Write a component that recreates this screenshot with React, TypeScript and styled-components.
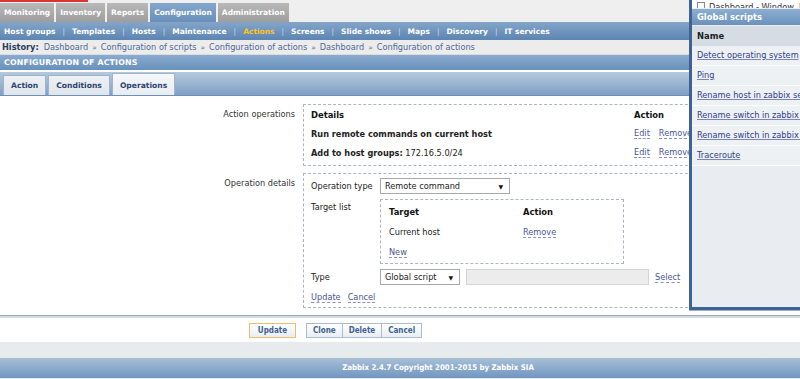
import React from 'react'
import styled, { createGlobalStyle, css } from 'styled-components'

const GlobalStyle = createGlobalStyle`
    html, body {
        margin: 0;
        padding: 0;
        background: #ffffff;
    }
    body {
        font-family: "DejaVu Sans", Verdana, sans-serif;
        font-size: 8.2px;
        color: #222;
    }
`;

const mainTabs = ["Monitoring", "Inventory", "Reports", "Configuration", "Administration"];
const subItems = ["Host groups", "Templates", "Hosts", "Maintenance", "Actions", "Screens", "Slide shows", "Maps", "Discovery", "IT services"];
const history = ["Dashboard", "Configuration of scripts", "Configuration of actions", "Dashboard", "Configuration of actions"];
const scripts = ["Detect operating system", "Ping", "Rename host in zabbix server", "Rename switch in zabbix server", "Rename switch in zabbix proxy", "Traceroute"];

export default function App() {
    return (
        <>
            <GlobalStyle />
            <Page>
                <TopBar>
                    <RedLine />
                    <MainTabs>
                        {mainTabs.map(t => <MainTab key={t} active={t === "Configuration"}>{t}</MainTab>)}
                    </MainTabs>
                </TopBar>

                <SubMenu>
                    {subItems.map((s, i) => (
                        <React.Fragment key={s}>
                            {i > 0 && <SubSep>|</SubSep>}
                            <SubItem active={s === "Actions"}>{s}</SubItem>
                        </React.Fragment>
                    ))}
                </SubMenu>

                <History>
                    <b>History:</b>
                    {history.map((h, i) => (
                        <React.Fragment key={i}>
                            {i > 0 && <HistSep>»</HistSep>}
                            <HistLink>{h}</HistLink>
                        </React.Fragment>
                    ))}
                </History>

                <TitleBar>CONFIGURATION OF ACTIONS</TitleBar>

                <TabsBar>
                    <FormTab>Action</FormTab>
                    <FormTab>Conditions</FormTab>
                    <FormTab active>Operations</FormTab>
                </TabsBar>

                <Content>
                    <FormRow>
                        <RowLabel>Action operations</RowLabel>
                        <Box>
                            <OpsGrid>
                                <HeadCell>Details</HeadCell>
                                <HeadCell>Action</HeadCell>
                                <Cell><b>Run remote commands on current host</b></Cell>
                                <Cell><DashLink>Edit</DashLink><DashLink>Remove</DashLink></Cell>
                                <Cell><span><b>Add to host groups:</b> 172.16.5.0/24</span></Cell>
                                <Cell><DashLink>Edit</DashLink><DashLink>Remove</DashLink></Cell>
                            </OpsGrid>
                        </Box>
                    </FormRow>

                    <FormRow>
                        <RowLabel>Operation details</RowLabel>
                        <Box>
                            <DetailGrid>
                                <InnerLabel>Operation type</InnerLabel>
                                <Select width={130}>Remote command<Arrow>▼</Arrow></Select>

                                <InnerLabel top>Target list</InnerLabel>
                                <TargetBox>
                                    <HeadCell>Target</HeadCell>
                                    <HeadCell>Action</HeadCell>
                                    <TargetCell>Current host</TargetCell>
                                    <TargetCell><DashLink>Remove</DashLink></TargetCell>
                                    <TargetCell><DashLink>New</DashLink></TargetCell>
                                    <TargetCell />
                                </TargetBox>

                                <InnerLabel>Type</InnerLabel>
                                <TypeLine>
                                    <Select width={80}>Global script<Arrow>▼</Arrow></Select>
                                    <TextInput />
                                    <DashLink>Select</DashLink>
                                </TypeLine>

                                <LinkLine>
                                    <DashLink>Update</DashLink>
                                    <DashLink>Cancel</DashLink>
                                </LinkLine>
                            </DetailGrid>
                        </Box>
                    </FormRow>
                </Content>

                <Divider />

                <Buttons>
                    <Button main>Update</Button>
                    <ButtonGroup>
                        <Button>Clone</Button>
                        <Button>Delete</Button>
                        <Button>Cancel</Button>
                    </ButtonGroup>
                </Buttons>

                <GrayBand />
                <Footer>Zabbix 2.4.7 Copyright 2001-2015 by Zabbix SIA</Footer>

                <Popup>
                    <PopupTop>
                        <CheckBox />
                        <PopupTopText>Dashboard - Window, Linux</PopupTopText>
                    </PopupTop>
                    <PopupHeader>Global scripts</PopupHeader>
                    <PopupNameRow>Name</PopupNameRow>
                    {scripts.map((s, i) => (
                        <PopupRow key={i}><PopupLink>{s}</PopupLink></PopupRow>
                    ))}
                </Popup>
            </Page>
        </>
    )
}

const Page = styled.div`
    position: relative;
    width: 800px;
    height: 379px;
    overflow: hidden;
    background: #ffffff;
`;

const TopBar = styled.div`
    height: 22px;
    background: #efefef;
`;

const RedLine = styled.div`
    width: 88px;
    height: 2px;
    background: #d9342f;
`;

const MainTabs = styled.div`
    display: flex;
    gap: 2px;
    margin-top: 1px;
`;

const MainTab = styled.div<{ active?: boolean }>`
    height: 19px;
    line-height: 19px;
    padding: 0 4px;
    font-size: 7.5px;
    font-weight: bold;
    color: #fff;
    background: linear-gradient(#b9b9b9, #9d9d9d);
    ${p => p.active && css`
        background: linear-gradient(#84a6cb, #6890ba);
    `}
`;

const SubMenu = styled.div`
    display: flex;
    align-items: center;
    height: 18px;
    padding-left: 4px;
    background: linear-gradient(#84a5c9, #5c85b2);
`;

const SubItem = styled.span<{ active?: boolean }>`
    font-size: 7.5px;
    font-weight: bold;
    color: ${p => p.active ? "#ffc31a" : "#ffffff"};
`;

const SubSep = styled.span`
    margin: 0 7px;
    font-size: 7.5px;
    color: #c9d8e8;
`;

const History = styled.div`
    height: 15px;
    line-height: 15px;
    padding-left: 2px;
    background: #ececec;
    font-size: 8.2px;
    color: #2b3e5e;
    border-bottom: 1px solid #dcdcdc;
    box-sizing: border-box;
    white-space: nowrap;

    b {
        margin-right: 5px;
    }
`;

const HistLink = styled.span`
    color: #4d6a96;
`;

const HistSep = styled.span`
    margin: 0 4px;
    color: #5a6f8f;
    font-size: 7.5px;
`;

const TitleBar = styled.div`
    height: 15px;
    line-height: 15px;
    padding-left: 4px;
    font-size: 7.8px;
    font-weight: bold;
    color: #fff;
    letter-spacing: 0.2px;
    background: linear-gradient(#8aabcf, #6790bb);
`;

const TabsBar = styled.div`
    display: flex;
    align-items: flex-end;
    gap: 2px;
    height: 23px;
    margin-top: 2px;
    padding-left: 3px;
    background: linear-gradient(#b6c9dd, #7fa0c4);
    border-bottom: 1px solid #6d8fb6;
`;

const FormTab = styled.div<{ active?: boolean }>`
    height: 19px;
    line-height: 19px;
    padding: 0 7px;
    font-size: 7.6px;
    font-weight: bold;
    color: #2c4570;
    background: linear-gradient(#eef1f4, #dfe5eb);
    border: 1px solid #9fb3cb;
    border-bottom: none;
    ${p => p.active && css`
        height: 21px;
        line-height: 23px;
        background: linear-gradient(#f6f8fa, #e8edf2);
    `}
`;

const Content = styled.div`
    display: flex;
    flex-direction: column;
    gap: 7px;
    padding-top: 8px;
    height: 218px;
    box-sizing: border-box;
`;

const FormRow = styled.div`
    display: grid;
    grid-template-columns: 295px 420px;
    column-gap: 8px;
`;

const RowLabel = styled.div`
    text-align: right;
    padding-top: 5px;
    color: #333;
`;

const Box = styled.div`
    border: 1px dashed #aab6c4;
`;

const OpsGrid = styled.div`
    display: grid;
    grid-template-columns: 323px 1fr;
    grid-auto-rows: 19px;
    padding: 0 7px 3px;
`;

const HeadCell = styled.div`
    display: flex;
    align-items: center;
    font-weight: bold;
    font-size: 8.4px;
    color: #111;
`;

const Cell = styled.div`
    display: flex;
    align-items: center;
    gap: 9px;
    white-space: nowrap;
    color: #222;
`;

const DashLink = styled.span`
    color: #4a5694;
    border-bottom: 1px dashed #8a92bf;
    line-height: 10px;
    white-space: nowrap;
`;

const DetailGrid = styled.div`
    display: grid;
    grid-template-columns: 69px 1fr;
    row-gap: 5px;
    padding: 4px 7px 2px;
`;

const InnerLabel = styled.div<{ top?: boolean }>`
    display: flex;
    align-items: ${p => p.top ? "flex-start" : "center"};
    padding-top: ${p => p.top ? "3px" : "0"};
    color: #222;
`;

const Select = styled.div<{ width: number }>`
    position: relative;
    width: ${p => p.width}px;
    height: 16px;
    line-height: 15px;
    box-sizing: border-box;
    padding-left: 4px;
    border: 1px solid #a8a8a8;
    background: #fff;
    color: #222;
`;

const Arrow = styled.span`
    position: absolute;
    right: 6px;
    top: 0;
    font-size: 6px;
    color: #111;
`;

const TargetBox = styled.div`
    display: grid;
    grid-template-columns: 134px 1fr;
    grid-auto-rows: 20px;
    width: 244px;
    box-sizing: border-box;
    padding: 2px 8px 1px;
    border: 1px dashed #aab6c4;
`;

const TargetCell = styled.div`
    display: flex;
    align-items: center;
    color: #222;
`;

const TypeLine = styled.div`
    display: flex;
    align-items: center;
    gap: 6px;
`;

const TextInput = styled.div`
    width: 183px;
    height: 16px;
    box-sizing: border-box;
    background: #ececec;
    border: 1px solid #d4d4d4;
`;

const LinkLine = styled.div`
    grid-column: 1 / span 2;
    display: flex;
    gap: 7px;
    height: 15px;
    align-items: center;
`;

const Divider = styled.div`
    height: 2px;
    border-top: 1px solid #9aa8b8;
    background: #d3dde8;
    margin-top: 1px;
`;

const Buttons = styled.div`
    display: flex;
    gap: 10px;
    padding: 5px 0 3px 249px;
`;

const ButtonGroup = styled.div`
    display: flex;
`;

const Button = styled.div<{ main?: boolean }>`
    height: 15px;
    line-height: 14px;
    box-sizing: border-box;
    padding: 0 6px;
    font-family: "DejaVu Sans Condensed", "DejaVu Sans", sans-serif;
    font-size: 8px;
    font-weight: bold;
    color: #3e6190;
    background: linear-gradient(#ffffff, #e9eef3);
    border: 1px solid #aabdd3;
    & + & {
        border-left: none;
    }
    ${p => p.main && css`
        width: 47px;
        text-align: center;
        border-color: #f1bb6a;
    `}
`;

const GrayBand = styled.div`
    height: 16px;
    margin-top: 1px;
    background: #e7ebee;
`;

const Footer = styled.div`
    height: 20px;
    line-height: 20px;
    padding-left: 76px;
    text-align: center;
    font-family: "DejaVu Sans Condensed", "DejaVu Sans", sans-serif;
    font-size: 7.8px;
    font-weight: bold;
    color: #fff;
    background: linear-gradient(#a9bfd7, #7096bf);
    border-bottom: 3px solid #e4e9ee;
`;

const Popup = styled.div`
    position: absolute;
    left: 689px;
    top: 0;
    width: 120px;
    height: 310px;
    box-sizing: border-box;
    background: #e9edf1;
    border-left: 3px solid #3f6294;
    border-bottom: 3px solid #3f6294;
    box-shadow: 0 1px 0 #9fb0c4;
`;

const PopupTop = styled.div`
    display: flex;
    align-items: flex-end;
    gap: 4px;
    height: 8px;
    padding-left: 5px;
    overflow: hidden;
    background: #fff;
`;

const CheckBox = styled.div`
    flex: none;
    width: 6px;
    height: 7px;
    margin-bottom: -3px;
    border: 1px solid #888;
    background: #fff;
`;

const PopupTopText = styled.span`
    white-space: nowrap;
    margin-bottom: -4px;
    color: #333;
`;

const PopupHeader = styled.div`
    height: 16px;
    line-height: 16px;
    margin-top: 1px;
    padding-left: 5px;
    font-weight: bold;
    font-size: 8.4px;
    color: #fff;
    background: linear-gradient(#8caed2, #6b92bc);
`;

const PopupNameRow = styled.div`
    height: 20px;
    line-height: 20px;
    margin-top: 1px;
    padding-left: 5px;
    font-weight: bold;
    font-size: 8.4px;
    color: #1e1e1e;
    background: #d5dce4;
`;

const PopupRow = styled.div`
    height: 19px;
    line-height: 19px;
    padding-left: 5px;
    white-space: nowrap;
    background: #eef1f4;
    border-bottom: 1px solid #fbfcfd;
`;

const PopupLink = styled.span`
    color: #2f3f86;
    text-decoration: underline;
    text-decoration-color: #7a86b8;
`;
